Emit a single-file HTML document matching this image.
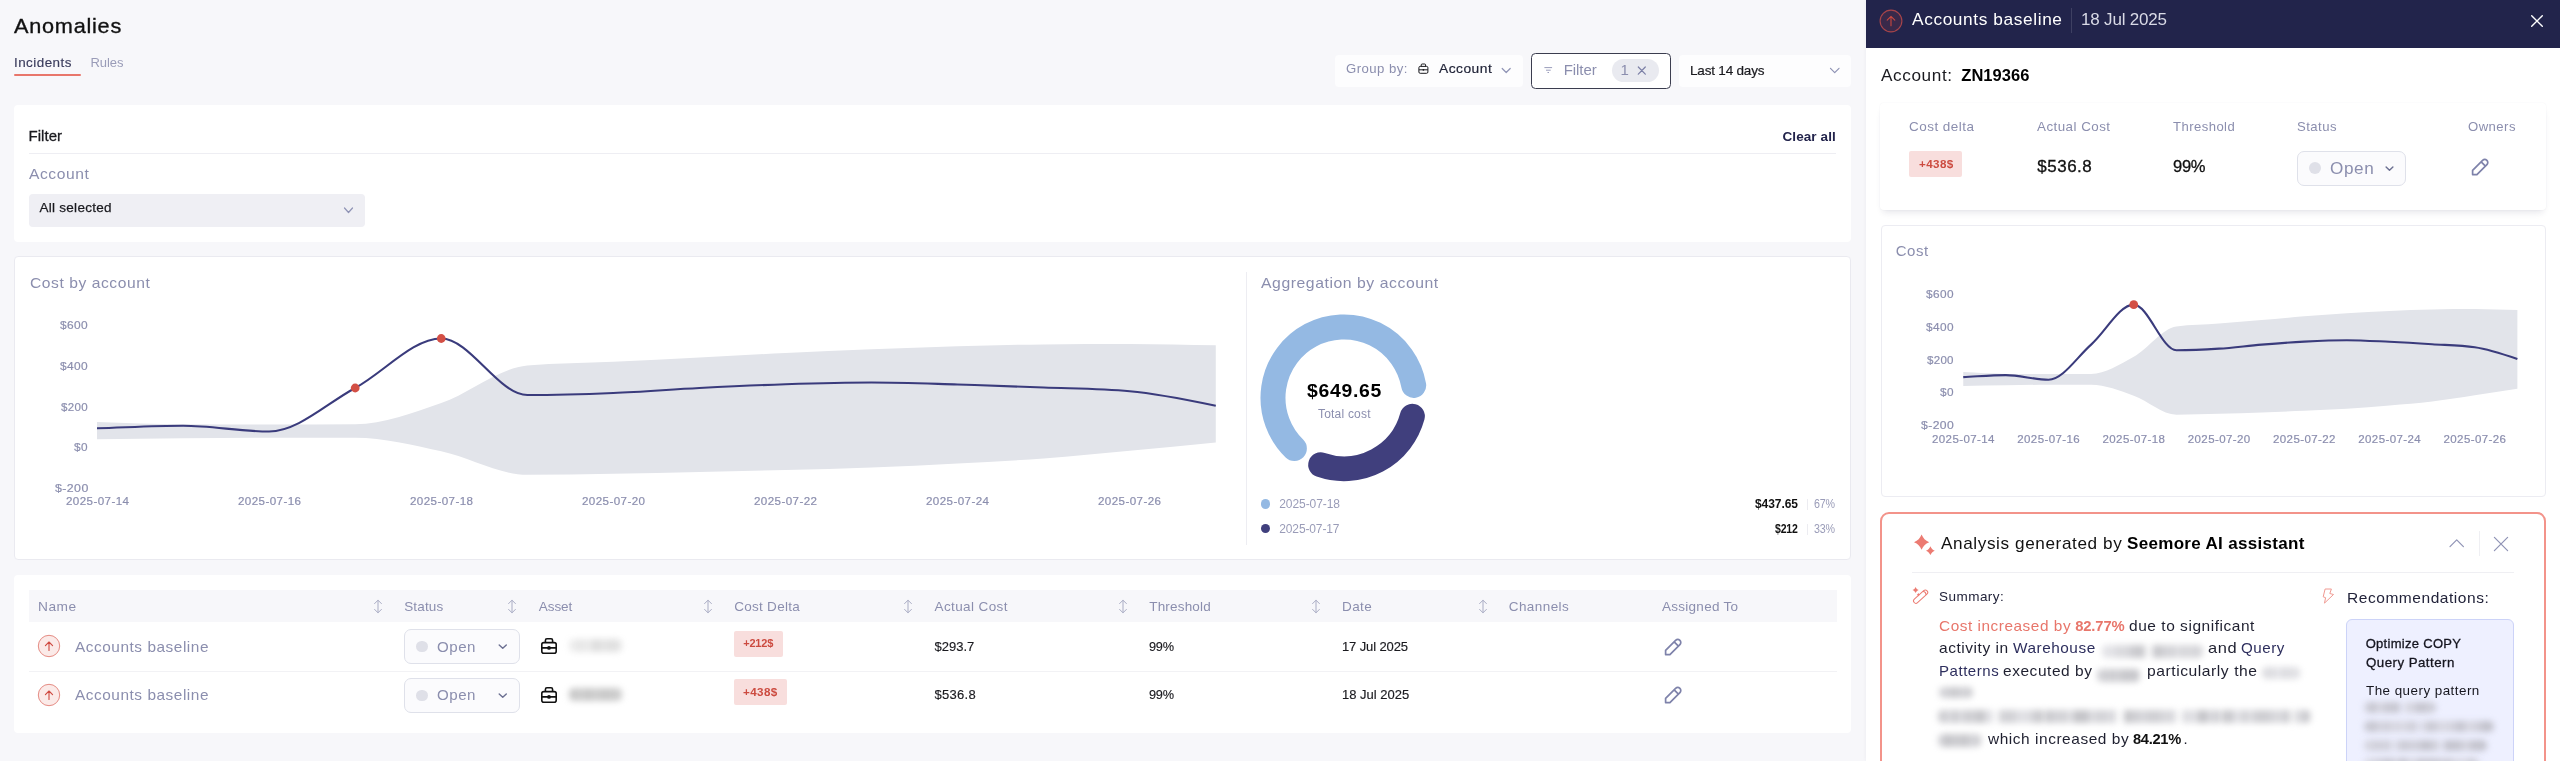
<!DOCTYPE html>
<html lang="en"><head><meta charset="utf-8"><title>Anomalies</title>
<style>
html,body{margin:0;padding:0;}
body{width:2560px;height:761px;overflow:hidden;position:relative;will-change:transform;background:#f7f7fa;font-family:"Liberation Sans",sans-serif;}
.t{position:absolute;white-space:nowrap;display:block;transform-origin:0 50%;}
.b{position:absolute;display:block;}
</style></head><body>
<span class="t" style="left:14.20px;top:11.80px;font-size:21px;line-height:27px;color:#111;letter-spacing:0.735px;transform:scaleX(1.0322);-webkit-text-stroke:0.35px #111;">Anomalies</span>
<span class="t" style="left:14.20px;top:54.10px;font-size:13px;line-height:17px;color:#3a3c5c;letter-spacing:0.455px;transform:scaleX(1.0310);-webkit-text-stroke:0.15px #3a3c5c;">Incidents</span>
<span class="t" style="left:90.50px;top:54.10px;font-size:13px;line-height:17px;color:#9a9cb8;letter-spacing:-0.062px;">Rules</span>
<div class="b" style="left:14px;top:74.2px;width:67px;height:2.1px;background:#e8766b;border-radius:1px;"></div>
<div class="b" style="left:1335px;top:54.5px;width:187.5px;height:32.5px;background:#fdfdfe;border-radius:4px;"></div>
<span class="t" style="left:1346.00px;top:60.00px;font-size:13px;line-height:17px;color:#8b8eae;letter-spacing:0.455px;transform:scaleX(1.0125);">Group by:</span>
<svg class="b" style="left:1417px;top:62px;" width="13" height="13" viewBox="0 0 13 13" fill="none"><rect x="1.9" y="4.4" width="9" height="6.9" rx="1.3" stroke="#1a1a1f" stroke-width="1"/><path d="M4.2 4.4V3a1 1 0 0 1 1-1h2.4a1 1 0 0 1 1 1v1.4M1.9 7.8h9" stroke="#1a1a1f" stroke-width="1"/><circle cx="6.4" cy="7.8" r="0.9" fill="#1a1a1f"/></svg>
<span class="t" style="left:1439.00px;top:60.00px;font-size:13px;line-height:17px;color:#23263a;letter-spacing:0.455px;transform:scaleX(1.0605);-webkit-text-stroke:0.2px #23263a;">Account</span>
<svg class="b" style="left:1500px;top:65px;" width="13" height="11" viewBox="0 0 13 11" fill="none"><path d="M2.2 3.5L6.2 7.5L10.2 3.5" stroke="#8f93b5" stroke-width="1.2" stroke-linecap="round" stroke-linejoin="round"/></svg>
<div class="b" style="left:1530.6px;top:52.6px;width:140.3px;height:36.4px;background:#fff;border:1.6px solid #3b3d4f;border-radius:4.5px;box-sizing:border-box;"></div>
<svg class="b" style="left:1542px;top:64px;" width="13" height="12" viewBox="0 0 13 12" fill="none"><path d="M2.4 3.6H10.1M4 6.2H8.7M5.5 8.5H7" stroke="#9a9dbb" stroke-width="1" /></svg>
<span class="t" style="left:1563.70px;top:60.00px;font-size:15px;line-height:20px;color:#8b8eae;letter-spacing:-0.048px;">Filter</span>
<div class="b" style="left:1611.7px;top:59.4px;width:46.9px;height:22.5px;background:#e9eaf0;border-radius:12px;"></div>
<span class="t" style="left:1620.50px;top:60.00px;font-size:15px;line-height:20px;color:#8b8eae;letter-spacing:0.000px;">1</span>
<svg class="b" style="left:1635px;top:64px;" width="14" height="14" viewBox="0 0 14 14" fill="none"><path d="M3.3 3L10.3 10.2M10.3 3L3.3 10.2" stroke="#7b7fa6" stroke-width="1.2" stroke-linecap="round"/></svg>
<div class="b" style="left:1678.5px;top:54.5px;width:172.5px;height:32.5px;background:#fdfdfe;border-radius:4px;"></div>
<span class="t" style="left:1690.00px;top:62.00px;font-size:13.5px;line-height:18px;color:#1a1a1f;letter-spacing:-0.186px;-webkit-text-stroke:0.2px #1a1a1f;">Last 14 days</span>
<svg class="b" style="left:1828px;top:65px;" width="13" height="11" viewBox="0 0 13 11" fill="none"><path d="M2.5 3.3L6.7 7.7L11 3.3" stroke="#8f93b5" stroke-width="1.2" stroke-linecap="round" stroke-linejoin="round"/></svg>
<div class="b" style="left:13.8px;top:105.4px;width:1837.2px;height:136.7px;background:#fff;border-radius:4px;"></div>
<span class="t" style="left:28.50px;top:126.00px;font-size:15px;line-height:20px;color:#1a1a1f;letter-spacing:0.033px;-webkit-text-stroke:0.3px #1a1a1f;">Filter</span>
<span class="t" style="left:1782.50px;top:127.50px;font-size:13.5px;line-height:18px;color:#22234b;letter-spacing:0.088px;font-weight:700;">Clear all</span>
<div class="b" style="left:28.5px;top:152.8px;width:1807.5px;height:1px;background:#eeeef3;"></div>
<span class="t" style="left:29.00px;top:164.00px;font-size:15.5px;line-height:20px;color:#8b8eae;letter-spacing:0.543px;transform:scaleX(1.0085);">Account</span>
<div class="b" style="left:28.75px;top:194.25px;width:336.25px;height:32.5px;background:#efeff4;border-radius:4px;"></div>
<span class="t" style="left:39.50px;top:199.25px;font-size:13.5px;line-height:18px;color:#1a1a1f;letter-spacing:0.268px;-webkit-text-stroke:0.25px #1a1a1f;">All selected</span>
<svg class="b" style="left:342px;top:204px;" width="13" height="12" viewBox="0 0 13 12" fill="none"><path d="M2.5 4L6.5 8.5L10.5 4" stroke="#8f93b5" stroke-width="1.2" stroke-linecap="round" stroke-linejoin="round"/></svg>
<div class="b" style="left:13.8px;top:256px;width:1836.8px;height:304.3px;background:#fff;border:1.3px solid #eaeaf0;border-radius:4px;box-sizing:border-box;"></div>
<span class="t" style="left:29.50px;top:273.00px;font-size:15px;line-height:20px;color:#8b8eae;letter-spacing:0.525px;transform:scaleX(1.0422);">Cost by account</span>
<span class="t" style="left:60.00px;top:318.25px;font-size:11.5px;line-height:15px;color:#8b8eae;letter-spacing:0.403px;transform:scaleX(1.0356);-webkit-text-stroke:0.2px #8b8eae;">$600</span>
<span class="t" style="left:60.00px;top:358.85px;font-size:11.5px;line-height:15px;color:#8b8eae;letter-spacing:0.403px;transform:scaleX(1.0356);-webkit-text-stroke:0.2px #8b8eae;">$400</span>
<span class="t" style="left:61.00px;top:399.95px;font-size:11.5px;line-height:15px;color:#8b8eae;letter-spacing:0.387px;-webkit-text-stroke:0.2px #8b8eae;">$200</span>
<span class="t" style="left:74.25px;top:440.05px;font-size:11.5px;line-height:15px;color:#8b8eae;letter-spacing:0.403px;transform:scaleX(1.0230);-webkit-text-stroke:0.2px #8b8eae;">$0</span>
<span class="t" style="left:54.50px;top:481.05px;font-size:11.5px;line-height:15px;color:#8b8eae;letter-spacing:0.403px;transform:scaleX(1.0718);-webkit-text-stroke:0.2px #8b8eae;">$-200</span>
<span class="t" style="left:65.50px;top:494.00px;font-size:11.5px;line-height:15px;color:#8b8eae;letter-spacing:0.403px;transform:scaleX(1.0089);-webkit-text-stroke:0.2px #8b8eae;">2025-07-14</span>
<span class="t" style="left:237.62px;top:494.00px;font-size:11.5px;line-height:15px;color:#8b8eae;letter-spacing:0.403px;transform:scaleX(1.0089);-webkit-text-stroke:0.2px #8b8eae;">2025-07-16</span>
<span class="t" style="left:409.74px;top:494.00px;font-size:11.5px;line-height:15px;color:#8b8eae;letter-spacing:0.403px;transform:scaleX(1.0089);-webkit-text-stroke:0.2px #8b8eae;">2025-07-18</span>
<span class="t" style="left:581.86px;top:494.00px;font-size:11.5px;line-height:15px;color:#8b8eae;letter-spacing:0.403px;transform:scaleX(1.0089);-webkit-text-stroke:0.2px #8b8eae;">2025-07-20</span>
<span class="t" style="left:753.98px;top:494.00px;font-size:11.5px;line-height:15px;color:#8b8eae;letter-spacing:0.403px;transform:scaleX(1.0089);-webkit-text-stroke:0.2px #8b8eae;">2025-07-22</span>
<span class="t" style="left:926.10px;top:494.00px;font-size:11.5px;line-height:15px;color:#8b8eae;letter-spacing:0.403px;transform:scaleX(1.0089);-webkit-text-stroke:0.2px #8b8eae;">2025-07-24</span>
<span class="t" style="left:1098.22px;top:494.00px;font-size:11.5px;line-height:15px;color:#8b8eae;letter-spacing:0.403px;transform:scaleX(1.0089);-webkit-text-stroke:0.2px #8b8eae;">2025-07-26</span>
<svg class="b" style="left:90px;top:300px;" width="1140" height="200" viewBox="0 0 1140 200" fill="none"><path d="M7.00,122.00C35.69,123.04 64.37,124.08 93.06,124.25C121.75,124.42 150.43,124.50 179.12,124.50C207.81,124.50 236.49,124.42 265.18,124.25C293.87,124.08 322.55,112.79 351.24,103.00C379.93,93.21 408.61,68.00 437.30,65.50C465.99,63.00 494.67,63.08 523.36,61.75C552.05,60.42 580.73,58.96 609.42,57.50C638.11,56.04 666.79,54.38 695.48,53.00C724.17,51.62 752.85,50.38 781.54,49.25C810.23,48.12 838.91,47.06 867.60,46.25C896.29,45.44 924.97,44.67 953.66,44.40C982.35,44.13 1011.03,44.00 1039.72,44.00C1068.41,44.00 1097.09,44.83 1125.78,45.25L1125.78,142.50C1097.09,145.29 1068.41,148.08 1039.72,150.75C1011.03,153.42 982.35,156.39 953.66,158.50C924.97,160.61 896.29,161.90 867.60,163.40C838.91,164.90 810.23,166.40 781.54,167.50C752.85,168.60 724.17,169.25 695.48,170.00C666.79,170.75 638.11,171.38 609.42,172.00C580.73,172.62 552.05,173.29 523.36,173.75C494.67,174.21 465.99,174.75 437.30,174.75C408.61,174.75 379.93,157.42 351.24,151.25C322.55,145.08 293.87,137.75 265.18,137.75C236.49,137.75 207.81,137.75 179.12,137.75C150.43,137.75 121.75,138.00 93.06,138.25C64.37,138.50 35.69,138.88 7.00,139.25Z" fill="#e2e4ea"/><path d="M7.00,128.25C35.69,127.42 64.37,125.75 93.06,125.75C121.75,125.75 150.43,131.50 179.12,131.50C207.81,131.50 236.49,103.50 265.18,88.00C293.87,72.50 322.55,38.50 351.24,38.50C379.93,38.50 408.61,95.00 437.30,95.00C465.99,95.00 494.67,94.17 523.36,93.00C552.05,91.83 580.73,89.46 609.42,88.00C638.11,86.54 666.79,85.17 695.48,84.25C724.17,83.33 752.85,82.50 781.54,82.50C810.23,82.50 838.91,83.67 867.60,84.50C896.29,85.33 924.97,86.38 953.66,87.50C982.35,88.62 1011.03,88.75 1039.72,91.25C1068.41,93.75 1097.09,99.75 1125.78,105.75" stroke="#3a3b7c" stroke-width="2.1" fill="none"/><circle cx="265.18" cy="88.00" r="4.4" fill="#d34f45"/><circle cx="351.24" cy="38.50" r="4.4" fill="#d34f45"/></svg>
<div class="b" style="left:1245.5px;top:272px;width:1px;height:272.5px;background:#ededf2;"></div>
<span class="t" style="left:1261.00px;top:273.00px;font-size:15px;line-height:20px;color:#8b8eae;letter-spacing:0.525px;transform:scaleX(1.0511);">Aggregation by account</span>
<svg class="b" style="left:1250px;top:305px;" width="190" height="186" viewBox="0 0 190 186" fill="none"><path d="M163.70,80.36A70.9,70.9 0 1 0 44.38,143.54" stroke="#94b9e3" stroke-width="25" stroke-linecap="round"/><path d="M70.70,159.80A70.9,70.9 0 0 0 162.35,111.27" stroke="#403f7d" stroke-width="25" stroke-linecap="round"/></svg>
<span class="t" style="left:1307.00px;top:380.00px;font-size:18px;line-height:23px;color:#000;letter-spacing:0.630px;transform:scaleX(1.0784);font-weight:700;">$649.65</span>
<span class="t" style="left:1318.00px;top:406.00px;font-size:12px;line-height:16px;color:#8b8eae;letter-spacing:0.200px;">Total cost</span>
<div class="b" style="left:1260.5px;top:499.4px;width:9.5px;height:9.5px;background:#94b9e3;border-radius:50%;"></div>
<div class="b" style="left:1260.5px;top:523.8px;width:9.5px;height:9.5px;background:#403f7d;border-radius:50%;"></div>
<span class="t" style="left:1279.25px;top:496.00px;font-size:12px;line-height:16px;color:#9a9cb8;letter-spacing:-0.070px;">2025-07-18</span>
<span class="t" style="left:1279.25px;top:520.50px;font-size:12px;line-height:16px;color:#9a9cb8;letter-spacing:-0.126px;">2025-07-17</span>
<span class="t" style="left:1755.00px;top:496.00px;font-size:12px;line-height:16px;color:#111;letter-spacing:-0.063px;font-weight:700;">$437.65</span>
<span class="t" style="left:1775.25px;top:520.50px;font-size:12px;line-height:16px;color:#111;letter-spacing:-0.240px;transform:scaleX(0.8757);font-weight:700;">$212</span>
<div class="b" style="left:1807px;top:499px;width:1px;height:11px;background:#ececf1;"></div>
<div class="b" style="left:1807px;top:523.5px;width:1px;height:11px;background:#ececf1;"></div>
<span class="t" style="left:1814.00px;top:496.00px;font-size:12px;line-height:16px;color:#9a9cb8;letter-spacing:-0.240px;transform:scaleX(0.8917);">67%</span>
<span class="t" style="left:1814.00px;top:520.50px;font-size:12px;line-height:16px;color:#9a9cb8;letter-spacing:-0.240px;transform:scaleX(0.8917);">33%</span>
<div class="b" style="left:13.8px;top:575.4px;width:1837.2px;height:158.1px;background:#fff;border-radius:4px;"></div>
<div class="b" style="left:28.75px;top:590px;width:1808.25px;height:32px;background:#f7f7fa;"></div>
<span class="t" style="left:37.50px;top:597.75px;font-size:13.5px;line-height:18px;color:#8b8eae;letter-spacing:0.473px;transform:scaleX(1.0153);">Name</span>
<span class="t" style="left:404.20px;top:597.75px;font-size:13.5px;line-height:18px;color:#8b8eae;letter-spacing:0.156px;">Status</span>
<span class="t" style="left:538.75px;top:597.75px;font-size:13.5px;line-height:18px;color:#8b8eae;letter-spacing:-0.062px;">Asset</span>
<span class="t" style="left:734.25px;top:597.75px;font-size:13.5px;line-height:18px;color:#8b8eae;letter-spacing:0.273px;">Cost Delta</span>
<span class="t" style="left:934.50px;top:597.75px;font-size:13.5px;line-height:18px;color:#8b8eae;letter-spacing:0.398px;">Actual Cost</span>
<span class="t" style="left:1149.25px;top:597.75px;font-size:13.5px;line-height:18px;color:#8b8eae;letter-spacing:0.182px;">Threshold</span>
<span class="t" style="left:1342.00px;top:597.75px;font-size:13.5px;line-height:18px;color:#8b8eae;letter-spacing:0.410px;">Date</span>
<span class="t" style="left:1508.75px;top:597.75px;font-size:13.5px;line-height:18px;color:#8b8eae;letter-spacing:0.423px;">Channels</span>
<span class="t" style="left:1662.00px;top:597.75px;font-size:13.5px;line-height:18px;color:#8b8eae;letter-spacing:0.269px;">Assigned To</span>
<svg class="b" style="left:372.6px;top:598.6px;" width="10" height="15" viewBox="0 0 10 15" fill="none"><path d="M5 1.3V13.7M1.6 4.6L5 1.2L8.4 4.6M1.6 10.4L5 13.8L8.4 10.4" stroke="#a9acc4" stroke-width="1" stroke-linecap="round" stroke-linejoin="round"/></svg>
<svg class="b" style="left:507.4px;top:598.6px;" width="10" height="15" viewBox="0 0 10 15" fill="none"><path d="M5 1.3V13.7M1.6 4.6L5 1.2L8.4 4.6M1.6 10.4L5 13.8L8.4 10.4" stroke="#a9acc4" stroke-width="1" stroke-linecap="round" stroke-linejoin="round"/></svg>
<svg class="b" style="left:703.1px;top:598.6px;" width="10" height="15" viewBox="0 0 10 15" fill="none"><path d="M5 1.3V13.7M1.6 4.6L5 1.2L8.4 4.6M1.6 10.4L5 13.8L8.4 10.4" stroke="#a9acc4" stroke-width="1" stroke-linecap="round" stroke-linejoin="round"/></svg>
<svg class="b" style="left:902.75px;top:598.6px;" width="10" height="15" viewBox="0 0 10 15" fill="none"><path d="M5 1.3V13.7M1.6 4.6L5 1.2L8.4 4.6M1.6 10.4L5 13.8L8.4 10.4" stroke="#a9acc4" stroke-width="1" stroke-linecap="round" stroke-linejoin="round"/></svg>
<svg class="b" style="left:1117.9px;top:598.6px;" width="10" height="15" viewBox="0 0 10 15" fill="none"><path d="M5 1.3V13.7M1.6 4.6L5 1.2L8.4 4.6M1.6 10.4L5 13.8L8.4 10.4" stroke="#a9acc4" stroke-width="1" stroke-linecap="round" stroke-linejoin="round"/></svg>
<svg class="b" style="left:1311px;top:598.6px;" width="10" height="15" viewBox="0 0 10 15" fill="none"><path d="M5 1.3V13.7M1.6 4.6L5 1.2L8.4 4.6M1.6 10.4L5 13.8L8.4 10.4" stroke="#a9acc4" stroke-width="1" stroke-linecap="round" stroke-linejoin="round"/></svg>
<svg class="b" style="left:1477.5px;top:598.6px;" width="10" height="15" viewBox="0 0 10 15" fill="none"><path d="M5 1.3V13.7M1.6 4.6L5 1.2L8.4 4.6M1.6 10.4L5 13.8L8.4 10.4" stroke="#a9acc4" stroke-width="1" stroke-linecap="round" stroke-linejoin="round"/></svg>
<div class="b" style="left:28.75px;top:670.5px;width:1808.25px;height:1px;background:#f2f2f5;"></div>
<svg class="b" style="left:36.6px;top:634.4px;" width="24" height="24" viewBox="0 0 24 24" fill="none"><circle cx="12" cy="12" r="10.7" fill="#fbeae8" stroke="#e58b83" stroke-width="1"/><path d="M12 16.4V8M8.4 11.6L12 8L15.6 11.6" stroke="#cf4a41" stroke-width="1.1" stroke-linecap="round" stroke-linejoin="round"/></svg>
<span class="t" style="left:74.50px;top:636.50px;font-size:15px;line-height:20px;color:#8b8eae;letter-spacing:0.525px;transform:scaleX(1.0256);">Accounts baseline</span>
<div class="b" style="left:403.5px;top:629.25px;width:116.5px;height:34.5px;background:#fbfbfd;border:1.2px solid #dfe1ea;border-radius:7px;box-sizing:border-box;"></div>
<div class="b" style="left:416px;top:640.75px;width:11.5px;height:11.5px;background:#dfe0e8;border-radius:50%;"></div>
<span class="t" style="left:437.00px;top:636.50px;font-size:15px;line-height:20px;color:#8b8eae;letter-spacing:0.525px;transform:scaleX(1.0056);">Open</span>
<svg class="b" style="left:496px;top:640px;" width="14" height="12" viewBox="0 0 14 12" fill="none"><path d="M3.2 4.9L6.75 8.3L10.3 4.9" stroke="#6c7092" stroke-width="1.4" stroke-linecap="round" stroke-linejoin="round"/></svg>
<svg class="b" style="left:540.1px;top:636.8px;" width="18" height="18" viewBox="0 0 18 18" fill="none"><rect x="1.8" y="5.6" width="14.4" height="10.6" rx="2" stroke="#111" stroke-width="1.6"/><path d="M5.4 5.4V3.4a1.6 1.6 0 0 1 1.6-1.6h4a1.6 1.6 0 0 1 1.6 1.6v2M1.8 10.9h14.4" stroke="#111" stroke-width="1.6"/><circle cx="9" cy="10.9" r="1.9" fill="#111"/></svg>
<div class="b" style="left:569px;top:639.3px;width:53px;height:13px;background:linear-gradient(90deg,rgba(236,236,236,1) 0.0px,rgba(236,236,236,1) 7.1px,rgba(231,231,231,1) 7.1px,rgba(231,231,231,1) 14.8px,rgba(235,235,235,1) 14.8px,rgba(235,235,235,1) 22.8px,rgba(222,222,222,1) 22.8px,rgba(222,222,222,1) 31.5px,rgba(228,228,228,1) 31.5px,rgba(228,228,228,1) 39.2px,rgba(224,224,224,1) 39.2px,rgba(224,224,224,1) 47.8px,rgba(229,229,229,1) 47.8px,rgba(229,229,229,1) 52.0px,rgba(230,230,230,1) 52.0px,rgba(230,230,230,1) 53px);filter:blur(3px);border-radius:5px;"></div>
<div class="b" style="left:734px;top:631px;width:48.75px;height:25.5px;background:#f8dedd;border-radius:2px;"></div>
<span class="t" style="left:743.25px;top:636.25px;font-size:11px;line-height:14px;color:#cc4b40;letter-spacing:-0.220px;font-weight:700;">+212$</span>
<span class="t" style="left:934.50px;top:637.50px;font-size:13px;line-height:17px;color:#1a1a1f;letter-spacing:0.000px;-webkit-text-stroke:0.15px #1a1a1f;">$293.7</span>
<span class="t" style="left:1149.25px;top:637.50px;font-size:13px;line-height:17px;color:#1a1a1f;letter-spacing:-0.260px;transform:scaleX(0.9799);-webkit-text-stroke:0.15px #1a1a1f;">99%</span>
<span class="t" style="left:1342.00px;top:637.50px;font-size:13px;line-height:17px;color:#1a1a1f;letter-spacing:-0.121px;-webkit-text-stroke:0.15px #1a1a1f;">17 Jul 2025</span>
<svg class="b" style="left:1664.4px;top:637.6px;" width="18" height="18" viewBox="0 0 18 18" fill="none"><path d="M1.6 16.6V12.4L11.6 2.4A3 3 0 0 1 15.9 6.7L5.9 16.7H1.7M10.2 3.9L14.4 8.1" stroke="#7e82aa" stroke-width="1.7" stroke-linejoin="round" stroke-linecap="round"/></svg>
<svg class="b" style="left:36.6px;top:683.1999999999999px;" width="24" height="24" viewBox="0 0 24 24" fill="none"><circle cx="12" cy="12" r="10.7" fill="#fbeae8" stroke="#e58b83" stroke-width="1"/><path d="M12 16.4V8M8.4 11.6L12 8L15.6 11.6" stroke="#cf4a41" stroke-width="1.1" stroke-linecap="round" stroke-linejoin="round"/></svg>
<span class="t" style="left:74.50px;top:685.30px;font-size:15px;line-height:20px;color:#8b8eae;letter-spacing:0.525px;transform:scaleX(1.0256);">Accounts baseline</span>
<div class="b" style="left:403.5px;top:678.05px;width:116.5px;height:34.5px;background:#fbfbfd;border:1.2px solid #dfe1ea;border-radius:7px;box-sizing:border-box;"></div>
<div class="b" style="left:416px;top:689.55px;width:11.5px;height:11.5px;background:#dfe0e8;border-radius:50%;"></div>
<span class="t" style="left:437.00px;top:685.30px;font-size:15px;line-height:20px;color:#8b8eae;letter-spacing:0.525px;transform:scaleX(1.0056);">Open</span>
<svg class="b" style="left:496px;top:688.8px;" width="14" height="12" viewBox="0 0 14 12" fill="none"><path d="M3.2 4.9L6.75 8.3L10.3 4.9" stroke="#6c7092" stroke-width="1.4" stroke-linecap="round" stroke-linejoin="round"/></svg>
<svg class="b" style="left:540.1px;top:685.5999999999999px;" width="18" height="18" viewBox="0 0 18 18" fill="none"><rect x="1.8" y="5.6" width="14.4" height="10.6" rx="2" stroke="#111" stroke-width="1.6"/><path d="M5.4 5.4V3.4a1.6 1.6 0 0 1 1.6-1.6h4a1.6 1.6 0 0 1 1.6 1.6v2M1.8 10.9h14.4" stroke="#111" stroke-width="1.6"/><circle cx="9" cy="10.9" r="1.9" fill="#111"/></svg>
<div class="b" style="left:569px;top:687.856px;width:53px;height:13px;background:linear-gradient(90deg,rgba(200,200,200,1) 0.0px,rgba(200,200,200,1) 8.0px,rgba(207,207,207,1) 8.0px,rgba(207,207,207,1) 16.1px,rgba(199,199,199,1) 16.1px,rgba(199,199,199,1) 22.5px,rgba(207,207,207,1) 22.5px,rgba(207,207,207,1) 27.8px,rgba(206,206,206,1) 27.8px,rgba(206,206,206,1) 31.8px,rgba(201,201,201,1) 31.8px,rgba(201,201,201,1) 39.1px,rgba(203,203,203,1) 39.1px,rgba(203,203,203,1) 45.5px,rgba(205,205,205,1) 45.5px,rgba(205,205,205,1) 53px);filter:blur(3px);border-radius:5px;"></div>
<div class="b" style="left:734px;top:679.312px;width:53px;height:25.5px;background:#f8dedd;border-radius:2px;"></div>
<span class="t" style="left:743.25px;top:684.56px;font-size:11px;line-height:14px;color:#cc4b40;letter-spacing:0.385px;transform:scaleX(1.0564);font-weight:700;">+438$</span>
<span class="t" style="left:934.50px;top:686.30px;font-size:13px;line-height:17px;color:#1a1a1f;letter-spacing:0.300px;-webkit-text-stroke:0.15px #1a1a1f;">$536.8</span>
<span class="t" style="left:1149.25px;top:686.30px;font-size:13px;line-height:17px;color:#1a1a1f;letter-spacing:-0.260px;transform:scaleX(0.9799);-webkit-text-stroke:0.15px #1a1a1f;">99%</span>
<span class="t" style="left:1342.00px;top:686.30px;font-size:13px;line-height:17px;color:#1a1a1f;letter-spacing:0.004px;-webkit-text-stroke:0.15px #1a1a1f;">18 Jul 2025</span>
<svg class="b" style="left:1664.4px;top:686.4px;" width="18" height="18" viewBox="0 0 18 18" fill="none"><path d="M1.6 16.6V12.4L11.6 2.4A3 3 0 0 1 15.9 6.7L5.9 16.7H1.7M10.2 3.9L14.4 8.1" stroke="#7e82aa" stroke-width="1.7" stroke-linejoin="round" stroke-linecap="round"/></svg>
<div class="b" style="left:1866px;top:0px;width:694px;height:761px;background:#fff;box-shadow:-1px 0 3px rgba(30,30,60,0.03);"></div>
<div class="b" style="left:1866px;top:0px;width:694px;height:47.5px;background:#22244b;"></div>
<svg class="b" style="left:1878.8px;top:8.5px;" width="24" height="24" viewBox="0 0 24 24" fill="none"><circle cx="12" cy="12" r="10.9" fill="rgba(220,80,70,0.13)" stroke="#a8454a" stroke-width="1.1"/><path d="M12 16.8V7.4M8.2 11.2L12 7.4L15.8 11.2" stroke="#c9483f" stroke-width="1.1" stroke-linecap="round" stroke-linejoin="round"/></svg>
<span class="t" style="left:1911.50px;top:9.25px;font-size:17px;line-height:22px;color:#fff;letter-spacing:0.595px;transform:scaleX(1.0168);">Accounts baseline</span>
<div class="b" style="left:2071px;top:7.5px;width:1px;height:25.5px;background:rgba(255,255,255,0.13);"></div>
<span class="t" style="left:2081.00px;top:9.25px;font-size:17px;line-height:22px;color:#d9dae6;letter-spacing:-0.189px;">18 Jul 2025</span>
<svg class="b" style="left:2529px;top:12.75px;" width="16" height="16" viewBox="0 0 16 16" fill="none"><path d="M2.7 2.7L13.3 13.3M13.3 2.7L2.7 13.3" stroke="#fff" stroke-width="1.4" stroke-linecap="round"/></svg>
<span class="t" style="left:1880.50px;top:64.75px;font-size:16.5px;line-height:21px;color:#1a1a1f;letter-spacing:0.578px;transform:scaleX(1.0406);">Account:</span>
<span class="t" style="left:1961.25px;top:64.75px;font-size:16.5px;line-height:21px;color:#000;letter-spacing:0.059px;font-weight:700;">ZN19366</span>
<div class="b" style="left:1880px;top:102.8px;width:665.5px;height:106.8px;background:#fff;border-radius:4px;box-shadow:0 5px 7px -3px rgba(40,40,80,0.13),0 0 2px rgba(40,40,80,0.05);"></div>
<span class="t" style="left:1909.25px;top:118.25px;font-size:13px;line-height:17px;color:#8b8eae;letter-spacing:0.455px;transform:scaleX(1.0373);">Cost delta</span>
<span class="t" style="left:2037.00px;top:118.25px;font-size:13px;line-height:17px;color:#8b8eae;letter-spacing:0.455px;transform:scaleX(1.0280);">Actual Cost</span>
<span class="t" style="left:2172.50px;top:118.25px;font-size:13px;line-height:17px;color:#8b8eae;letter-spacing:0.455px;transform:scaleX(1.0048);">Threshold</span>
<span class="t" style="left:2296.75px;top:118.25px;font-size:13px;line-height:17px;color:#8b8eae;letter-spacing:0.455px;transform:scaleX(1.0095);">Status</span>
<span class="t" style="left:2468.25px;top:118.25px;font-size:13px;line-height:17px;color:#8b8eae;letter-spacing:0.455px;transform:scaleX(1.0093);">Owners</span>
<div class="b" style="left:1909px;top:151px;width:53.25px;height:26px;background:#f8dedd;border-radius:2px;"></div>
<span class="t" style="left:1918.50px;top:157.00px;font-size:11px;line-height:14px;color:#cc4b40;letter-spacing:0.385px;transform:scaleX(1.0564);font-weight:700;">+438$</span>
<span class="t" style="left:2037.25px;top:156.00px;font-size:17px;line-height:22px;color:#111;letter-spacing:0.504px;-webkit-text-stroke:0.3px #111;">$536.8</span>
<span class="t" style="left:2173.00px;top:156.00px;font-size:17px;line-height:22px;color:#111;letter-spacing:-0.340px;transform:scaleX(0.9741);-webkit-text-stroke:0.3px #111;">99%</span>
<div class="b" style="left:2296.5px;top:151px;width:109.5px;height:34.5px;background:#fbfbfd;border:1.2px solid #dfe1ea;border-radius:7px;box-sizing:border-box;"></div>
<div class="b" style="left:2308.5px;top:162.25px;width:12px;height:12px;background:#dfe0e8;border-radius:50%;"></div>
<span class="t" style="left:2329.50px;top:157.90px;font-size:16px;line-height:21px;color:#8b8eae;letter-spacing:0.560px;transform:scaleX(1.0713);">Open</span>
<svg class="b" style="left:2382.5px;top:162px;" width="14" height="12" viewBox="0 0 14 12" fill="none"><path d="M3.1 4.9L6.5 8.3L9.9 4.9" stroke="#6c7092" stroke-width="1.4" stroke-linecap="round" stroke-linejoin="round"/></svg>
<svg class="b" style="left:2470.9px;top:157.9px;" width="18" height="18" viewBox="0 0 18 18" fill="none"><path d="M1.6 16.6V12.4L11.6 2.4A3 3 0 0 1 15.9 6.7L5.9 16.7H1.7M10.2 3.9L14.4 8.1" stroke="#7e82aa" stroke-width="1.7" stroke-linejoin="round" stroke-linecap="round"/></svg>
<div class="b" style="left:1880.5px;top:224.5px;width:665px;height:272.5px;background:#fff;border:1px solid #ececf2;border-radius:4px;box-sizing:border-box;"></div>
<span class="t" style="left:1895.75px;top:241.00px;font-size:15px;line-height:20px;color:#8b8eae;letter-spacing:0.525px;">Cost</span>
<span class="t" style="left:1926.00px;top:287.10px;font-size:11.5px;line-height:15px;color:#8b8eae;letter-spacing:0.403px;transform:scaleX(1.0263);-webkit-text-stroke:0.2px #8b8eae;">$600</span>
<span class="t" style="left:1926.00px;top:319.85px;font-size:11.5px;line-height:15px;color:#8b8eae;letter-spacing:0.403px;transform:scaleX(1.0263);-webkit-text-stroke:0.2px #8b8eae;">$400</span>
<span class="t" style="left:1927.00px;top:352.85px;font-size:11.5px;line-height:15px;color:#8b8eae;letter-spacing:0.304px;-webkit-text-stroke:0.2px #8b8eae;">$200</span>
<span class="t" style="left:1940.00px;top:385.35px;font-size:11.5px;line-height:15px;color:#8b8eae;letter-spacing:0.403px;transform:scaleX(1.0230);-webkit-text-stroke:0.2px #8b8eae;">$0</span>
<span class="t" style="left:1920.75px;top:418.35px;font-size:11.5px;line-height:15px;color:#8b8eae;letter-spacing:0.403px;transform:scaleX(1.0557);-webkit-text-stroke:0.2px #8b8eae;">$-200</span>
<span class="t" style="left:1932.00px;top:431.50px;font-size:11.5px;line-height:15px;color:#8b8eae;letter-spacing:0.403px;-webkit-text-stroke:0.2px #8b8eae;">2025-07-14</span>
<span class="t" style="left:2017.25px;top:431.50px;font-size:11.5px;line-height:15px;color:#8b8eae;letter-spacing:0.403px;-webkit-text-stroke:0.2px #8b8eae;">2025-07-16</span>
<span class="t" style="left:2102.50px;top:431.50px;font-size:11.5px;line-height:15px;color:#8b8eae;letter-spacing:0.403px;-webkit-text-stroke:0.2px #8b8eae;">2025-07-18</span>
<span class="t" style="left:2187.75px;top:431.50px;font-size:11.5px;line-height:15px;color:#8b8eae;letter-spacing:0.403px;-webkit-text-stroke:0.2px #8b8eae;">2025-07-20</span>
<span class="t" style="left:2273.00px;top:431.50px;font-size:11.5px;line-height:15px;color:#8b8eae;letter-spacing:0.403px;-webkit-text-stroke:0.2px #8b8eae;">2025-07-22</span>
<span class="t" style="left:2358.25px;top:431.50px;font-size:11.5px;line-height:15px;color:#8b8eae;letter-spacing:0.403px;-webkit-text-stroke:0.2px #8b8eae;">2025-07-24</span>
<span class="t" style="left:2443.50px;top:431.50px;font-size:11.5px;line-height:15px;color:#8b8eae;letter-spacing:0.403px;-webkit-text-stroke:0.2px #8b8eae;">2025-07-26</span>
<svg class="b" style="left:1955px;top:270px;" width="580" height="170" viewBox="0 0 580 170" fill="none"><path d="M8.25,102.08C22.46,102.92 36.67,103.76 50.88,103.90C65.08,104.03 79.29,104.10 93.50,104.10C107.71,104.10 121.92,104.03 136.12,103.90C150.33,103.76 164.54,94.64 178.75,86.74C192.96,78.83 207.17,58.48 221.38,56.46C235.58,54.44 249.79,54.51 264.00,53.43C278.21,52.35 292.42,51.17 306.62,50.00C320.83,48.82 335.04,47.47 349.25,46.36C363.46,45.25 377.67,44.24 391.88,43.34C406.08,42.43 420.29,41.57 434.50,40.91C448.71,40.26 462.92,39.63 477.12,39.42C491.33,39.20 505.54,39.10 519.75,39.10C533.96,39.10 548.17,39.77 562.38,40.11L562.38,118.63C548.17,120.89 533.96,123.14 519.75,125.29C505.54,127.45 491.33,129.85 477.12,131.55C462.92,133.25 448.71,134.30 434.50,135.51C420.29,136.72 406.08,137.93 391.88,138.82C377.67,139.71 363.46,140.23 349.25,140.84C335.04,141.44 320.83,141.95 306.62,142.45C292.42,142.96 278.21,143.50 264.00,143.87C249.79,144.24 235.58,144.67 221.38,144.67C207.17,144.67 192.96,130.68 178.75,125.70C164.54,120.72 150.33,114.80 136.12,114.80C121.92,114.80 107.71,114.80 93.50,114.80C79.29,114.80 65.08,115.00 50.88,115.20C36.67,115.40 22.46,115.70 8.25,116.01Z" fill="#e2e4ea"/><path d="M8.25,107.13C22.46,106.45 36.67,105.11 50.88,105.11C65.08,105.11 79.29,109.75 93.50,109.75C107.71,109.75 121.92,87.14 136.12,74.63C150.33,62.11 164.54,34.66 178.75,34.66C192.96,34.66 207.17,80.28 221.38,80.28C235.58,80.28 249.79,79.60 264.00,78.66C278.21,77.72 292.42,75.80 306.62,74.63C320.83,73.45 335.04,72.34 349.25,71.60C363.46,70.86 377.67,70.18 391.88,70.18C406.08,70.18 420.29,71.13 434.50,71.80C448.71,72.47 462.92,73.31 477.12,74.22C491.33,75.13 505.54,75.23 519.75,77.25C533.96,79.27 548.17,84.11 562.38,88.96" stroke="#3a3b7c" stroke-width="2.1" fill="none"/><circle cx="178.75" cy="34.66" r="4.4" fill="#d34f45"/></svg>
<div class="b" style="left:1880.2px;top:512.4px;width:665.6px;height:287.6px;background:#fff;border:2px solid #f3938a;border-radius:9px;box-sizing:border-box;"></div>
<svg class="b" style="left:1911px;top:531px;" width="28" height="28" viewBox="0 0 28 28" fill="none"><path d="M10.6,3.5999999999999996C12.272,7.552 14.248,9.527999999999999 18.2,11.2C14.248,12.872 12.272,14.847999999999999 10.6,18.799999999999997C8.927999999999999,14.847999999999999 6.952,12.872 3.0,11.2C6.952,9.527999999999999 8.927999999999999,7.552 10.6,3.5999999999999996ZM19.4,15.299999999999999C20.368,17.588 21.512,18.732 23.799999999999997,19.7C21.512,20.668 20.368,21.811999999999998 19.4,24.1C18.432,21.811999999999998 17.287999999999997,20.668 14.999999999999998,19.7C17.287999999999997,18.732 18.432,17.588 19.4,15.299999999999999Z" fill="#ec7b72"/></svg>
<span class="t" style="left:1940.50px;top:532.75px;font-size:17px;line-height:22px;color:#111;letter-spacing:0.595px;transform:scaleX(1.0090);">Analysis generated by</span>
<span class="t" style="left:2127.00px;top:532.75px;font-size:17px;line-height:22px;color:#000;letter-spacing:0.323px;font-weight:700;">Seemore AI assistant</span>
<svg class="b" style="left:2448px;top:536px;" width="18" height="14" viewBox="0 0 18 14" fill="none"><path d="M2 10.6L8.7 3.9L15.4 10.6" stroke="#8f93b5" stroke-width="1.2" stroke-linecap="round" stroke-linejoin="round"/></svg>
<div class="b" style="left:2478.5px;top:531px;width:1px;height:24.5px;background:#efeff3;"></div>
<svg class="b" style="left:2492px;top:534.6px;" width="18" height="18" viewBox="0 0 18 18" fill="none"><path d="M2.4 2.4L15.6 15.6M15.6 2.4L2.4 15.6" stroke="#8f93b5" stroke-width="1.2" stroke-linecap="round"/></svg>
<div class="b" style="left:1911.7px;top:571.7px;width:602.1px;height:1px;background:#efeff3;"></div>
<svg class="b" style="left:1911px;top:585px;" width="20" height="20" viewBox="0 0 20 20" fill="none"><path d="M4.6,1.9C5.282,3.512 6.087999999999999,4.318 7.699999999999999,5C6.087999999999999,5.682 5.282,6.4879999999999995 4.6,8.1C3.9179999999999997,6.4879999999999995 3.1119999999999997,5.682 1.4999999999999996,5C3.1119999999999997,4.318 3.9179999999999997,3.512 4.6,1.9ZM7.4,7.999999999999999C7.774,8.883999999999999 8.216000000000001,9.325999999999999 9.1,9.7C8.216000000000001,10.074 7.774,10.516 7.4,11.399999999999999C7.026000000000001,10.516 6.5840000000000005,10.074 5.7,9.7C6.5840000000000005,9.325999999999999 7.026000000000001,8.883999999999999 7.4,7.999999999999999Z" fill="#ec7b72"/><g transform="translate(9.7,11.6) rotate(-42)" stroke="#ec7b72" stroke-width="1" fill="none"><rect x="-8.8" y="-2.4" width="17.4" height="4.8" rx="2.4"/><path d="M5.2 -2.4C6.2 -1 6.2 1 5.2 2.4"/></g></svg>
<span class="t" style="left:1939.00px;top:587.50px;font-size:13.5px;line-height:18px;color:#22233a;letter-spacing:0.472px;">Summary:</span>
<svg class="b" style="left:2320px;top:586px;" width="18" height="20" viewBox="0 0 18 20" fill="none"><path d="M5.1 3H11.4L9.8 7.5L13.5 8.5L4.5 17.1L5.6 11.7L3.2 10.8Z" stroke="#f09a92" stroke-width="1" stroke-linejoin="round"/></svg>
<span class="t" style="left:2346.70px;top:588.10px;font-size:15px;line-height:20px;color:#22233a;letter-spacing:0.525px;transform:scaleX(1.0343);">Recommendations:</span>
<span class="t" style="left:1938.70px;top:616.60px;font-size:14.8px;line-height:19px;color:#e8766b;letter-spacing:0.518px;transform:scaleX(1.0382);">Cost increased by</span>
<span class="t" style="left:2075.20px;top:616.60px;font-size:14.8px;line-height:19px;color:#e8766b;letter-spacing:-0.142px;font-weight:700;">82.77%</span>
<span class="t" style="left:2129.40px;top:616.60px;font-size:14.8px;line-height:19px;color:#1f2030;letter-spacing:0.518px;transform:scaleX(1.0460);">due to significant</span>
<span class="t" style="left:1938.70px;top:639.10px;font-size:14.8px;line-height:19px;color:#1f2030;letter-spacing:0.518px;transform:scaleX(1.0478);">activity in</span>
<span class="t" style="left:2012.80px;top:639.10px;font-size:14.8px;line-height:19px;color:#2e2f5e;letter-spacing:0.518px;transform:scaleX(1.0367);">Warehouse</span>
<div class="b" style="left:2102px;top:645.0px;width:101px;height:13px;background:linear-gradient(90deg,rgba(227,227,231,1) 0.0px,rgba(227,227,231,1) 6.3px,rgba(227,227,231,1) 6.3px,rgba(227,227,231,1) 13.1px,rgba(218,218,222,1) 13.1px,rgba(218,218,222,1) 21.7px,rgba(217,217,221,1) 21.7px,rgba(217,217,221,1) 28.0px,rgba(204,204,208,1) 28.0px,rgba(204,204,208,1) 34.5px,rgba(200,200,204,1) 34.5px,rgba(200,200,204,1) 41.5px,rgba(214,214,218,1) 41.5px,rgba(214,214,218,1) 44px,rgba(201,201,205,0) 44px,rgba(201,201,205,0) 46.4px,rgba(205,205,209,0) 46.4px,rgba(205,205,209,0) 50px,rgba(206,206,210,1) 50px,rgba(206,206,210,1) 53.0px,rgba(200,200,204,1) 53.0px,rgba(200,200,204,1) 60.1px,rgba(212,212,216,1) 60.1px,rgba(212,212,216,1) 68.1px,rgba(212,212,216,1) 68.1px,rgba(212,212,216,1) 72.6px,rgba(223,223,227,1) 72.6px,rgba(223,223,227,1) 78.1px,rgba(214,214,218,1) 78.1px,rgba(214,214,218,1) 82.5px,rgba(217,217,221,1) 82.5px,rgba(217,217,221,1) 90.6px,rgba(213,213,217,1) 90.6px,rgba(213,213,217,1) 98.0px,rgba(218,218,222,1) 98.0px,rgba(218,218,222,1) 101px);filter:blur(3.2px);border-radius:5px;"></div>
<span class="t" style="left:2207.80px;top:639.10px;font-size:14.8px;line-height:19px;color:#1f2030;letter-spacing:0.518px;transform:scaleX(1.1122);">and</span>
<span class="t" style="left:2240.60px;top:639.10px;font-size:14.8px;line-height:19px;color:#2e2f5e;letter-spacing:0.518px;transform:scaleX(1.0244);">Query</span>
<span class="t" style="left:1938.70px;top:661.70px;font-size:14.8px;line-height:19px;color:#2e2f5e;letter-spacing:0.518px;transform:scaleX(1.0161);">Patterns</span>
<span class="t" style="left:2003.00px;top:661.70px;font-size:14.8px;line-height:19px;color:#1f2030;letter-spacing:0.518px;transform:scaleX(1.0472);">executed by</span>
<div class="b" style="left:2097px;top:668.5px;width:43px;height:13px;background:linear-gradient(90deg,rgba(210,210,214,1) 0.0px,rgba(210,210,214,1) 6.4px,rgba(207,207,211,1) 6.4px,rgba(207,207,211,1) 13.7px,rgba(206,206,210,1) 13.7px,rgba(206,206,210,1) 21.0px,rgba(209,209,213,1) 21.0px,rgba(209,209,213,1) 25.7px,rgba(195,195,199,1) 25.7px,rgba(195,195,199,1) 29.8px,rgba(203,203,207,1) 29.8px,rgba(203,203,207,1) 35.6px,rgba(195,195,199,1) 35.6px,rgba(195,195,199,1) 41.0px,rgba(216,216,220,1) 41.0px,rgba(216,216,220,1) 43px);filter:blur(3.2px);border-radius:5px;"></div>
<span class="t" style="left:2146.90px;top:661.70px;font-size:14.8px;line-height:19px;color:#1f2030;letter-spacing:0.518px;transform:scaleX(1.0576);">particularly the</span>
<div class="b" style="left:2262px;top:666.5px;width:38px;height:12px;background:linear-gradient(90deg,rgba(220,220,224,1) 0.0px,rgba(220,220,224,1) 5.3px,rgba(221,221,225,1) 5.3px,rgba(221,221,225,1) 12.7px,rgba(229,229,233,1) 12.7px,rgba(229,229,233,1) 20.1px,rgba(220,220,224,1) 20.1px,rgba(220,220,224,1) 28.4px,rgba(226,226,230,1) 28.4px,rgba(226,226,230,1) 33.3px,rgba(221,221,225,1) 33.3px,rgba(221,221,225,1) 38px);filter:blur(3.2px);border-radius:5px;"></div>
<div class="b" style="left:1939px;top:686.5px;width:34px;height:11px;background:linear-gradient(90deg,rgba(211,211,215,1) 0.0px,rgba(211,211,215,1) 4.5px,rgba(209,209,213,1) 4.5px,rgba(209,209,213,1) 12.0px,rgba(201,201,205,1) 12.0px,rgba(201,201,205,1) 19.3px,rgba(210,210,214,1) 19.3px,rgba(210,210,214,1) 28.0px,rgba(203,203,207,1) 28.0px,rgba(203,203,207,1) 33.4px,rgba(212,212,216,1) 33.4px,rgba(212,212,216,1) 34px);filter:blur(3.2px);border-radius:5px;"></div>
<div class="b" style="left:1938px;top:710.0px;width:373px;height:13px;background:linear-gradient(90deg,rgba(205,205,209,1) 0.0px,rgba(205,205,209,1) 8.8px,rgba(222,222,226,1) 8.8px,rgba(222,222,226,1) 12.9px,rgba(206,206,210,1) 12.9px,rgba(206,206,210,1) 20.6px,rgba(224,224,228,1) 20.6px,rgba(224,224,228,1) 25.4px,rgba(206,206,210,1) 25.4px,rgba(206,206,210,1) 34.3px,rgba(210,210,214,1) 34.3px,rgba(210,210,214,1) 38.4px,rgba(198,198,202,1) 38.4px,rgba(198,198,202,1) 46.8px,rgba(225,225,229,1) 46.8px,rgba(225,225,229,1) 54.2px,rgba(221,221,225,1) 54.2px,rgba(221,221,225,1) 55px,rgba(211,211,215,0) 55px,rgba(211,211,215,0) 61px,rgba(199,199,203,1) 61px,rgba(199,199,203,1) 62.5px,rgba(211,211,215,1) 62.5px,rgba(211,211,215,1) 71.5px,rgba(208,208,212,1) 71.5px,rgba(208,208,212,1) 76.7px,rgba(222,222,226,1) 76.7px,rgba(222,222,226,1) 82.3px,rgba(225,225,229,1) 82.3px,rgba(225,225,229,1) 89.9px,rgba(219,219,223,1) 89.9px,rgba(219,219,223,1) 95.3px,rgba(205,205,209,1) 95.3px,rgba(205,205,209,1) 100.6px,rgba(197,197,201,1) 100.6px,rgba(197,197,201,1) 105px,rgba(224,224,228,0) 105px,rgba(224,224,228,0) 105.8px,rgba(226,226,230,0) 105.8px,rgba(226,226,230,0) 107px,rgba(201,201,205,1) 107px,rgba(201,201,205,1) 114.0px,rgba(211,211,215,1) 114.0px,rgba(211,211,215,1) 122.4px,rgba(211,211,215,1) 122.4px,rgba(211,211,215,1) 130.4px,rgba(227,227,231,1) 130.4px,rgba(227,227,231,1) 135.5px,rgba(197,197,201,1) 135.5px,rgba(197,197,201,1) 144.1px,rgba(197,197,201,1) 144.1px,rgba(197,197,201,1) 150.7px,rgba(222,222,226,1) 150.7px,rgba(222,222,226,1) 155.9px,rgba(214,214,218,1) 155.9px,rgba(214,214,218,1) 162.1px,rgba(210,210,214,1) 162.1px,rgba(210,210,214,1) 168.2px,rgba(220,220,224,1) 168.2px,rgba(220,220,224,1) 172.6px,rgba(214,214,218,1) 172.6px,rgba(214,214,218,1) 178px,rgba(218,218,222,0) 178px,rgba(218,218,222,0) 179.5px,rgba(204,204,208,0) 179.5px,rgba(204,204,208,0) 185.3px,rgba(198,198,202,0) 185.3px,rgba(198,198,202,0) 186px,rgba(196,196,200,1) 186px,rgba(196,196,200,1) 192.1px,rgba(206,206,210,1) 192.1px,rgba(206,206,210,1) 200.8px,rgba(216,216,220,1) 200.8px,rgba(216,216,220,1) 208.0px,rgba(208,208,212,1) 208.0px,rgba(208,208,212,1) 214.0px,rgba(207,207,211,1) 214.0px,rgba(207,207,211,1) 222.3px,rgba(215,215,219,1) 222.3px,rgba(215,215,219,1) 231.3px,rgba(218,218,222,1) 231.3px,rgba(218,218,222,1) 237.8px,rgba(215,215,219,1) 237.8px,rgba(215,215,219,1) 238px,rgba(205,205,209,0) 238px,rgba(205,205,209,0) 244px,rgba(222,222,226,1) 244px,rgba(222,222,226,1) 246.5px,rgba(221,221,225,1) 246.5px,rgba(221,221,225,1) 250.6px,rgba(224,224,228,1) 250.6px,rgba(224,224,228,1) 255.3px,rgba(224,224,228,1) 255.3px,rgba(224,224,228,1) 260.1px,rgba(196,196,200,1) 260.1px,rgba(196,196,200,1) 268.8px,rgba(217,217,221,1) 268.8px,rgba(217,217,221,1) 276.3px,rgba(207,207,211,1) 276.3px,rgba(207,207,211,1) 282px,rgba(208,208,212,0) 282px,rgba(208,208,212,0) 283.9px,rgba(212,212,216,0) 283.9px,rgba(212,212,216,0) 284px,rgba(200,200,204,1) 284px,rgba(200,200,204,1) 289.3px,rgba(203,203,207,1) 289.3px,rgba(203,203,207,1) 295.8px,rgba(227,227,231,1) 295.8px,rgba(227,227,231,1) 304.2px,rgba(206,206,210,1) 304.2px,rgba(206,206,210,1) 308.7px,rgba(225,225,229,1) 308.7px,rgba(225,225,229,1) 313.3px,rgba(217,217,221,1) 313.3px,rgba(217,217,221,1) 317.5px,rgba(206,206,210,1) 317.5px,rgba(206,206,210,1) 323.9px,rgba(206,206,210,1) 323.9px,rgba(206,206,210,1) 332.1px,rgba(215,215,219,1) 332.1px,rgba(215,215,219,1) 338.9px,rgba(218,218,222,1) 338.9px,rgba(218,218,222,1) 344.9px,rgba(206,206,210,1) 344.9px,rgba(206,206,210,1) 351.4px,rgba(197,197,201,1) 351.4px,rgba(197,197,201,1) 352px,rgba(201,201,205,0) 352px,rgba(201,201,205,0) 356px,rgba(223,223,227,1) 356px,rgba(223,223,227,1) 356.3px,rgba(219,219,223,1) 356.3px,rgba(219,219,223,1) 365.0px,rgba(199,199,203,1) 365.0px,rgba(199,199,203,1) 370.8px,rgba(222,222,226,1) 370.8px,rgba(222,222,226,1) 373px);filter:blur(3.2px);border-radius:5px;"></div>
<div class="b" style="left:1938px;top:733.5px;width:43px;height:13px;background:linear-gradient(90deg,rgba(211,211,215,1) 0.0px,rgba(211,211,215,1) 5.8px,rgba(196,196,200,1) 5.8px,rgba(196,196,200,1) 12.2px,rgba(203,203,207,1) 12.2px,rgba(203,203,207,1) 18.3px,rgba(204,204,208,1) 18.3px,rgba(204,204,208,1) 24.5px,rgba(199,199,203,1) 24.5px,rgba(199,199,203,1) 30.6px,rgba(213,213,217,1) 30.6px,rgba(213,213,217,1) 37.9px,rgba(203,203,207,1) 37.9px,rgba(203,203,207,1) 43px);filter:blur(3.2px);border-radius:5px;"></div>
<span class="t" style="left:1987.84px;top:730.00px;font-size:14.8px;line-height:19px;color:#1f2030;letter-spacing:0.518px;transform:scaleX(1.0444);">which increased by</span>
<span class="t" style="left:2133.10px;top:730.00px;font-size:14.8px;line-height:19px;color:#111;letter-spacing:-0.296px;transform:scaleX(0.9912);font-weight:700;">84.21%</span>
<span class="t" style="left:2183.60px;top:730.00px;font-size:14.8px;line-height:19px;color:#1f2030;letter-spacing:0.000px;">.</span>
<div class="b" style="left:2346.3px;top:618.9px;width:167.7px;height:181.1px;background:#eef0ff;border:1px solid #ccd3f8;border-radius:6px;box-sizing:border-box;"></div>
<span class="t" style="left:2365.70px;top:635.20px;font-size:13px;line-height:17px;color:#15151f;letter-spacing:0.296px;-webkit-text-stroke:0.3px #15151f;">Optimize COPY</span>
<span class="t" style="left:2365.70px;top:654.20px;font-size:13px;line-height:17px;color:#15151f;letter-spacing:0.455px;transform:scaleX(1.0222);-webkit-text-stroke:0.3px #15151f;">Query Pattern</span>
<span class="t" style="left:2365.70px;top:681.70px;font-size:13px;line-height:17px;color:#16161e;letter-spacing:0.455px;transform:scaleX(1.0308);">The query pattern</span>
<div class="b" style="left:2364px;top:701.9px;width:72px;height:11px;background:linear-gradient(90deg,rgba(210,210,220,1) 0.0px,rgba(210,210,220,1) 4.8px,rgba(197,197,207,1) 4.8px,rgba(197,197,207,1) 12.3px,rgba(215,215,225,1) 12.3px,rgba(215,215,225,1) 19.4px,rgba(201,201,211,1) 19.4px,rgba(201,201,211,1) 25.8px,rgba(201,201,211,1) 25.8px,rgba(201,201,211,1) 30.9px,rgba(197,197,207,1) 30.9px,rgba(197,197,207,1) 36px,rgba(219,219,229,0) 36px,rgba(219,219,229,0) 38.9px,rgba(213,213,223,0) 38.9px,rgba(213,213,223,0) 40px,rgba(217,217,227,1) 40px,rgba(217,217,227,1) 46.9px,rgba(210,210,220,1) 46.9px,rgba(210,210,220,1) 53.5px,rgba(196,196,206,1) 53.5px,rgba(196,196,206,1) 60.0px,rgba(203,203,213,1) 60.0px,rgba(203,203,213,1) 65.2px,rgba(207,207,217,1) 65.2px,rgba(207,207,217,1) 69.2px,rgba(198,198,208,1) 69.2px,rgba(198,198,208,1) 72px);filter:blur(3px);border-radius:5px;"></div>
<div class="b" style="left:2364px;top:720.7px;width:130px;height:11px;background:linear-gradient(90deg,rgba(200,200,210,1) 0.0px,rgba(200,200,210,1) 8.8px,rgba(197,197,207,1) 8.8px,rgba(197,197,207,1) 13.5px,rgba(215,215,225,1) 13.5px,rgba(215,215,225,1) 17.6px,rgba(208,208,218,1) 17.6px,rgba(208,208,218,1) 26.6px,rgba(218,218,228,1) 26.6px,rgba(218,218,228,1) 31.5px,rgba(213,213,223,1) 31.5px,rgba(213,213,223,1) 36.1px,rgba(218,218,228,1) 36.1px,rgba(218,218,228,1) 43.4px,rgba(207,207,217,1) 43.4px,rgba(207,207,217,1) 49.1px,rgba(211,211,221,1) 49.1px,rgba(211,211,221,1) 54px,rgba(209,209,219,0) 54px,rgba(209,209,219,0) 57px,rgba(199,199,209,1) 57px,rgba(199,199,209,1) 57.6px,rgba(218,218,228,1) 57.6px,rgba(218,218,228,1) 62.7px,rgba(200,200,210,1) 62.7px,rgba(200,200,210,1) 71.5px,rgba(213,213,223,1) 71.5px,rgba(213,213,223,1) 77.1px,rgba(218,218,228,1) 77.1px,rgba(218,218,228,1) 84.1px,rgba(210,210,220,1) 84.1px,rgba(210,210,220,1) 92.8px,rgba(195,195,205,1) 92.8px,rgba(195,195,205,1) 100.2px,rgba(215,215,225,1) 100.2px,rgba(215,215,225,1) 108.8px,rgba(210,210,220,1) 108.8px,rgba(210,210,220,1) 116.4px,rgba(197,197,207,1) 116.4px,rgba(197,197,207,1) 120.6px,rgba(193,193,203,1) 120.6px,rgba(193,193,203,1) 129.0px,rgba(206,206,216,1) 129.0px,rgba(206,206,216,1) 130px);filter:blur(3px);border-radius:5px;"></div>
<div class="b" style="left:2364px;top:739.5px;width:123px;height:11px;background:linear-gradient(90deg,rgba(213,213,223,1) 0.0px,rgba(213,213,223,1) 8.6px,rgba(208,208,218,1) 8.6px,rgba(208,208,218,1) 17.4px,rgba(210,210,220,1) 17.4px,rgba(210,210,220,1) 25.8px,rgba(209,209,219,1) 25.8px,rgba(209,209,219,1) 28px,rgba(219,219,229,0) 28px,rgba(219,219,229,0) 30.2px,rgba(202,202,212,0) 30.2px,rgba(202,202,212,0) 31px,rgba(213,213,223,1) 31px,rgba(213,213,223,1) 37.2px,rgba(202,202,212,1) 37.2px,rgba(202,202,212,1) 43.3px,rgba(208,208,218,1) 43.3px,rgba(208,208,218,1) 50.0px,rgba(210,210,220,1) 50.0px,rgba(210,210,220,1) 54.6px,rgba(200,200,210,1) 54.6px,rgba(200,200,210,1) 59.6px,rgba(194,194,204,1) 59.6px,rgba(194,194,204,1) 65.8px,rgba(205,205,215,1) 65.8px,rgba(205,205,215,1) 70.9px,rgba(212,212,222,1) 70.9px,rgba(212,212,222,1) 76px,rgba(208,208,218,0) 76px,rgba(208,208,218,0) 77.2px,rgba(204,204,214,0) 77.2px,rgba(204,204,214,0) 79px,rgba(209,209,219,1) 79px,rgba(209,209,219,1) 81.3px,rgba(197,197,207,1) 81.3px,rgba(197,197,207,1) 85.7px,rgba(196,196,206,1) 85.7px,rgba(196,196,206,1) 93.3px,rgba(201,201,211,1) 93.3px,rgba(201,201,211,1) 99.4px,rgba(214,214,224,1) 99.4px,rgba(214,214,224,1) 106.0px,rgba(197,197,207,1) 106.0px,rgba(197,197,207,1) 113.6px,rgba(195,195,205,1) 113.6px,rgba(195,195,205,1) 119.4px,rgba(194,194,204,1) 119.4px,rgba(194,194,204,1) 123px);filter:blur(3px);border-radius:5px;"></div>
<div class="b" style="left:2364px;top:758.0px;width:116px;height:11px;background:linear-gradient(90deg,rgba(218,218,228,1) 0.0px,rgba(218,218,228,1) 7.6px,rgba(212,212,222,1) 7.6px,rgba(212,212,222,1) 15.8px,rgba(204,204,214,1) 15.8px,rgba(204,204,214,1) 20.7px,rgba(200,200,210,1) 20.7px,rgba(200,200,210,1) 29.7px,rgba(218,218,228,1) 29.7px,rgba(218,218,228,1) 34.6px,rgba(194,194,204,1) 34.6px,rgba(194,194,204,1) 42.0px,rgba(213,213,223,1) 42.0px,rgba(213,213,223,1) 46.4px,rgba(215,215,225,1) 46.4px,rgba(215,215,225,1) 54.2px,rgba(196,196,206,1) 54.2px,rgba(196,196,206,1) 59.0px,rgba(201,201,211,1) 59.0px,rgba(201,201,211,1) 66.5px,rgba(200,200,210,1) 66.5px,rgba(200,200,210,1) 74.1px,rgba(207,207,217,1) 74.1px,rgba(207,207,217,1) 82.0px,rgba(202,202,212,1) 82.0px,rgba(202,202,212,1) 88.2px,rgba(217,217,227,1) 88.2px,rgba(217,217,227,1) 96.5px,rgba(217,217,227,1) 96.5px,rgba(217,217,227,1) 105.5px,rgba(200,200,210,1) 105.5px,rgba(200,200,210,1) 110.0px,rgba(217,217,227,1) 110.0px,rgba(217,217,227,1) 116px);filter:blur(3px);border-radius:5px;"></div>
</body></html>
